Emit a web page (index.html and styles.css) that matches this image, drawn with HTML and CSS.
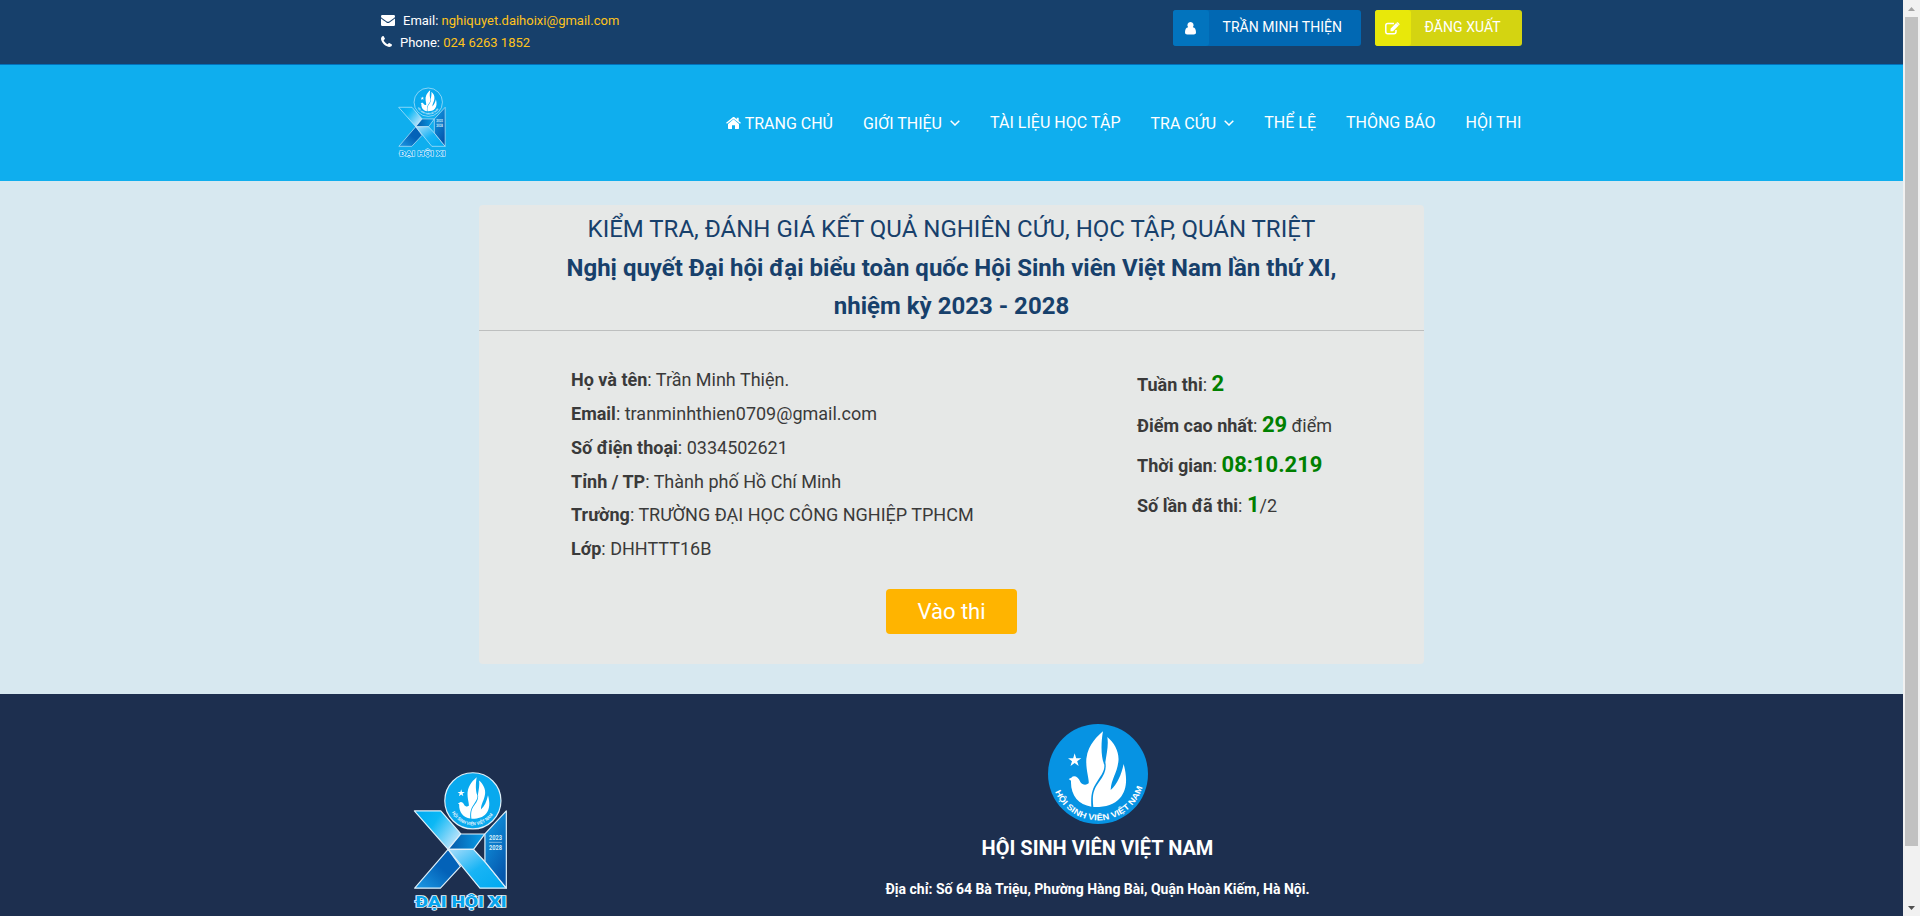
FILE: index.html
```html
<!DOCTYPE html>
<html lang="vi">
<head>
<meta charset="utf-8">
<title>Hội Sinh viên Việt Nam</title>
<link rel="stylesheet" href="styles.css">
</head>
<body>
<svg class="defs" width="0" height="0" aria-hidden="true">
  <defs>
    <linearGradient id="gA" x1="0" y1="0" x2="1" y2="0.6"><stop offset="0" stop-color="#00a8f0"/><stop offset=".45" stop-color="#0cb8f5"/><stop offset="1" stop-color="#b5e2fb"/></linearGradient>
    <linearGradient id="gB" x1="0" y1="1" x2="1" y2="0"><stop offset="0" stop-color="#1c9be6"/><stop offset=".55" stop-color="#0362b8"/><stop offset="1" stop-color="#0362b8"/></linearGradient>
    <linearGradient id="gC" x1="0" y1="0" x2="1" y2="1"><stop offset="0" stop-color="#a9defb"/><stop offset=".5" stop-color="#18b4f5"/><stop offset="1" stop-color="#00a9f0"/></linearGradient>
    <linearGradient id="gD" x1="0" y1="0" x2="1" y2="0"><stop offset="0" stop-color="#0558a8"/><stop offset="1" stop-color="#08a0ea"/></linearGradient>
    <linearGradient id="gE" x1="0" y1="0" x2="0.5" y2="1"><stop offset="0" stop-color="#12a0e8"/><stop offset="1" stop-color="#0558ae"/></linearGradient>
    <path id="arc" d="M75 243A139 139 0 0 0 338 228"/>
    <path id="smallarc" d="M185 184A72 72 0 0 0 315 182"/>
  </defs>
  <symbol id="bird" viewBox="0 0 420 390">
    <path fill="#fff" d="M219 63C205 76 175 100 169 145C167 180 178 205 176 219C168 226 157 224 151 215C145 198 131 194 124 202L116 206L123 211C121 255 145 284 184 289C182 255 186 236 202 213C217 190 224 181 223 163C212 140 213 95 219 63Z"/>
    <path fill="#fff" d="M232 80C254 98 269 127 265 155C260 192 244 205 242 239C262 222 274 193 281 161C292 202 292 237 270 263C252 284 224 291 190 290C186 255 190 238 207 215C224 193 230 176 226 156C230 128 236 105 232 80Z"/>
    <path fill="#fff" d="M134 129L138.500 143.500L154 143.500L141.500 152.500L146 167L134 158L121.500 167L126 152.500L114 143.500L129.500 143.500Z"/>
  </symbol>
  <symbol id="xi" viewBox="70 62 284 424">
    <g stroke="#dff1fb" stroke-width="3.500" stroke-linejoin="round">
      <path fill="url(#gA)" d="M74 181H153L213 250L175 296Z"/>
      <path fill="url(#gB)" d="M75 412L175 296L212 347L152 412Z"/>
      <path fill="url(#gD)" d="M213 250H285L251 296H175Z"/>
      <path fill="url(#gC)" d="M175 296H251L285 333L349 412H270Z"/>
      <path fill="url(#gE)" d="M285 250L349 181V412L285 333Z"/>
      <circle cx="249" cy="151" r="84" fill="#08a9ee"/>
    </g>
    <use href="#bird" x="141" y="46" width="229" height="213"/>
    <text class="mark-ring"><textPath href="#smallarc" startOffset="2" textLength="148" lengthAdjust="spacingAndGlyphs">HỘI SINH VIÊN VIỆT NAM</textPath></text>
    <text class="mark-year" x="297" y="269" textLength="39" lengthAdjust="spacingAndGlyphs">2023</text>
    <path stroke="#dff1fb" stroke-width="1.500" d="M297 275H336"/>
    <text class="mark-year" x="297" y="297" textLength="39" lengthAdjust="spacingAndGlyphs">2028</text>
    <text class="mark-name" x="77" y="468" textLength="273" lengthAdjust="spacingAndGlyphs">ĐẠI HỘI XI</text>
  </symbol>
</svg>

<div class="window">
  <div class="page">
    <header class="topbar">
      <div class="container topbar-row">
        <div class="contact">
          <div class="contact-line">
            <svg class="ico-mail" viewBox="0 0 14 11"><path fill="#fff" d="M1.200 0H12.800A1.200 1.200 0 0 1 14 1.200C14 2.100 13.400 2.800 12.700 3.300L8.200 6.400C7.300 7 6.700 7 5.800 6.400L1.300 3.300C.6 2.800 0 2 0 1.200A1.200 1.200 0 0 1 1.200 0ZM0 3.600C.6 4.200 4.500 6.800 5.400 7.400C6.500 8.100 7.500 8.100 8.600 7.400L14 3.600V9.800A1.200 1.200 0 0 1 12.800 11H1.200A1.200 1.200 0 0 1 0 9.800Z"/></svg>
            <span>Email: <a>nghiquyet.daihoixi@gmail.com</a></span>
          </div>
          <div class="contact-line">
            <svg class="ico-phone" viewBox="0 0 11 11"><path fill="#fff" d="M11 8.700C11 9.500 10.600 10.200 9.900 10.500C8.700 11.200 7.500 11.100 6 10.300C3.600 9.200 1.700 7.200.6 4.900C-.2 3.300-.2 2.200.6 1C.9.400 1.500 0 2.300 0C2.700 0 3 .7 3.900 2.600C4.300 3.400 2.500 4 2.700 4.500C3.200 5.800 5 7.600 6.400 8.300C7 8.500 7.600 6.900 8.200 7.100C10.600 8.300 11 8.500 11 8.700Z"/></svg>
            <span>Phone: <a>024 6263 1852</a></span>
          </div>
        </div>
        <div class="actions">
          <a class="btn btn-user"><span class="btn-ico"><svg width="11" height="13" viewBox="0 0 11 13"><path fill="#fff" d="M5.500 0A3.200 3.200 0 0 1 7.900 5.200C10 5.600 11 7.400 11 10.300C11 11.800 10.200 12.500 8.800 12.500H2.200C.8 12.500 0 11.800 0 10.300C0 7.400 1 5.600 3.100 5.200A3.200 3.200 0 0 1 5.500 0Z"/></svg></span><span class="btn-text">TRẦN MINH THIỆN</span></a>
          <a class="btn btn-out"><span class="btn-ico"><svg width="15" height="13" viewBox="0 0 15 13"><path fill="none" stroke="#fff" stroke-width="1.500" d="M9 1.600H2.700A2 2 0 0 0 .8 3.600V9.700A2 2 0 0 0 2.700 11.700H9A2 2 0 0 0 11 9.700V8"/><path fill="#fff" d="M11.200 1L13.700 3.500L8 9.200H5.500V6.700ZM11.800.5C12.200.1 12.700.1 13.100.5L14.300 1.700C14.700 2.100 14.700 2.600 14.300 3L14 3.200L11.500.8Z"/></svg></span><span class="btn-text">ĐĂNG XUẤT</span></a>
        </div>
      </div>
    </header>

    <nav class="nav">
      <div class="container nav-row">
        <svg class="nav-logo"><use href="#xi"/></svg>
        <div class="menu">
          <a class="item low"><svg class="ico-home" viewBox="0 0 15 12"><path fill="#fff" d="M7.500 2.300L13 6.900V11.300A.7.700 0 0 1 12.300 12H9V8.300H6V12H2.700A.7.700 0 0 1 2 11.300V6.900ZM7.500 0C7.900 0 8.200.1 8.500.3L10.700 2.200V.7H12.700V3.900L14.900 5.700L14.100 6.700L7.500 1.700L.9 6.700L.1 5.700L6.500.4C6.800.1 7.100 0 7.500 0Z"/></svg>TRANG CHỦ</a>
          <a class="item low">GIỚI THIỆU<svg class="chev" viewBox="0 0 10 6"><path fill="none" stroke="#fff" stroke-width="1.500" d="M.7.700L5 5L9.300.7"/></svg></a>
          <a class="item docs">TÀI LIỆU HỌC TẬP</a>
          <a class="item low">TRA CỨU<svg class="chev" viewBox="0 0 10 6"><path fill="none" stroke="#fff" stroke-width="1.500" d="M.7.700L5 5L9.300.7"/></svg></a>
          <a class="item">THỂ LỆ</a>
          <a class="item">THÔNG BÁO</a>
          <a class="item">HỘI THI</a>
        </div>
      </div>
    </nav>

    <main class="main">
      <section class="card">
        <h1 class="heading">KIỂM TRA, ĐÁNH GIÁ KẾT QUẢ NGHIÊN CỨU, HỌC TẬP, QUÁN TRIỆT<br><b>Nghị quyết Đại hội đại biểu toàn quốc Hội Sinh viên Việt Nam lần thứ XI,<br>nhiệm kỳ 2023 - 2028</b></h1>
        <div class="info">
          <div class="person">
            <div><b>Họ và tên</b>: Trần Minh Thiện.</div>
            <div><b>Email</b>: tranminhthien0709@gmail.com</div>
            <div><b>Số điện thoại</b>: 0334502621</div>
            <div><b>Tỉnh / TP</b>: Thành phố Hồ Chí Minh</div>
            <div><b>Trường</b>: TRƯỜNG ĐẠI HỌC CÔNG NGHIỆP TPHCM</div>
            <div><b>Lớp</b>: DHHTTT16B</div>
          </div>
          <div class="result">
            <div><b>Tuần thi</b>: <b class="num">2</b></div>
            <div><b>Điểm cao nhất</b>: <b class="num">29</b> điểm</div>
            <div><b>Thời gian</b>: <b class="num">08:10.219</b></div>
            <div><b>Số lần đã thi</b>: <b class="num">1</b>/2</div>
          </div>
        </div>
        <a class="start">Vào thi</a>
      </section>
    </main>

    <footer class="footer">
      <div class="container footer-row">
        <div class="foot-left"><svg class="foot-logo"><use href="#xi"/></svg></div>
        <div class="foot-right">
          <svg class="badge" viewBox="54 41 300 300"><circle cx="204" cy="191" r="150" fill="#0693e3"/><use href="#bird" width="420" height="390"/><text class="ring"><textPath href="#arc" startOffset="1" textLength="342" lengthAdjust="spacingAndGlyphs">HỘI SINH VIÊN VIỆT NAM</textPath></text></svg>
          <div class="org">HỘI SINH VIÊN VIỆT NAM</div>
          <div class="addr">Địa chỉ: Số 64 Bà Triệu, Phường Hàng Bài, Quận Hoàn Kiếm, Hà Nội.</div>
        </div>
      </div>
    </footer>
  </div>
  <div class="scroll">
    <svg width="17" height="17" viewBox="0 0 17 17"><path fill="#a3a3a3" d="M5 11L8.500 7L12 11Z"/></svg>
    <div class="thumb"></div>
    <svg width="17" height="17" viewBox="0 0 17 17"><path fill="#505050" d="M5 7L8.500 11L12 7Z"/></svg>
  </div>
</div>
</body>
</html>
```
FILE: styles.css
```css
* { box-sizing: border-box; }
body { margin: 0; font-family: Roboto, "Noto Sans", sans-serif; overflow: hidden; }
svg { display: block; flex: none; }
.defs { position: absolute; overflow: visible; }
.window { display: flex; width: 1920px; height: 916px; overflow: hidden; }
.page { width: 1903px; height: 916px; overflow: hidden; background: #d7e8f0; }
.container { width: 1141px; margin: 0 auto; display: flex; justify-content: space-between; }

.topbar { height: 65px; background: #17406b; border-bottom: 1px solid #0272bc; }
.contact { padding-top: 10px; font-size: 13px; line-height: 22px; color: #fff; }
.contact-line { display: flex; align-items: center; height: 22px; white-space: nowrap; }
.contact a { color: #ffc31c; }
.ico-mail { width: 14px; height: 11px; margin: -2px 8px 0 0; }
.ico-phone { width: 11px; height: 11px; margin: -3px 8px 0 0; }
.actions { display: flex; gap: 14px; padding-top: 10px; }
.btn { display: flex; height: 36px; border-radius: 3px; overflow: hidden; color: #fff; font-size: 14px; font-weight: 400; letter-spacing: .05px; line-height: 34px; white-space: nowrap; }
.btn-ico { width: 36px; padding-right: 1px; display: flex; align-items: center; justify-content: center; border-radius: 0 3px 3px 0; }
.btn-text { flex: 1; padding-left: 13.5px; }
.btn-user { width: 188px; background: #0168b3; }
.btn-user .btn-ico { background: #0274be; }
.btn-out { width: 147px; background: #d4d411; }
.btn-out .btn-ico { background: #e8e80a; }

.nav { height: 116px; background: #0faeee; }
.nav-logo { width: 48px; height: 72px; margin: 22px 0 0 17px; }
.menu { display: flex; gap: 30px; padding: 47px .7px 0 0; color: #fff; font-size: 16px; line-height: 22px; white-space: nowrap; }
.item { display: flex; align-items: center; height: 22px; }
.low { margin-top: 1px; }
.docs { letter-spacing: .03px; }
.ico-home { width: 15px; height: 12px; margin: -3px 4px 0 0; }
.chev { width: 10px; height: 6px; margin: -3px 0 0 8px; }

.main { height: 513px; padding-top: 24px; }
.card { width: 945px; height: 459px; margin: 0 auto; background: #e6e8e7; border-radius: 4px; overflow: hidden; }
.heading { margin: 0; height: 126px; padding-top: 5.300px; border-bottom: 1px solid #bdbfbf; color: #17406b; font-size: 24px; font-weight: 400; line-height: 38.4px; text-align: center; white-space: nowrap; }
b { font-weight: 700; }
.info { display: flex; height: 258px; color: #3a3a3a; font-size: 18px; font-weight: 400; white-space: nowrap; }
.person { width: 566px; margin-left: 92px; padding-top: 32px; line-height: 33.86px; }
.result { padding-top: 34.300px; line-height: 40.3px; }
.num { color: #008000; font-size: 22px; line-height: 1; }
.start { display: block; width: 131px; height: 45px; margin: 0 auto; border-radius: 4px; background: #ffb400; color: #fff; font-size: 22px; line-height: 45px; text-align: center; }

.footer { height: 222px; background: #1d2f4f; color: #fff; }
.foot-left { padding: 77px 0 0 32px; }
.foot-logo { width: 95px; height: 142px; }
.foot-right { width: 849px; padding-top: 30px; display: flex; flex-direction: column; align-items: center; font-weight: 700; }
.badge { width: 100px; height: 100px; }
.org { margin-top: 10px; font-size: 20px; line-height: 28px; }
.addr { margin-top: 16px; font-size: 14px; line-height: 22px; }
.ring { font: 700 25px "Liberation Sans", sans-serif; fill: #fff; }
.mark-ring { font: 700 14px "Liberation Sans", sans-serif; fill: #e8f6fd; }
.mark-year { font: 700 20px Roboto, sans-serif; fill: #d5effb; }
.mark-name { font: 900 45px Roboto, sans-serif; fill: #08a5ee; stroke: #e4f4fc; stroke-width: 5px; paint-order: stroke; }

.scroll { width: 17px; height: 916px; background: #f1f1f1; display: flex; flex-direction: column; }
.thumb { width: 13px; height: 829px; margin: 0 2px auto; background: #c1c1c1; }
```
